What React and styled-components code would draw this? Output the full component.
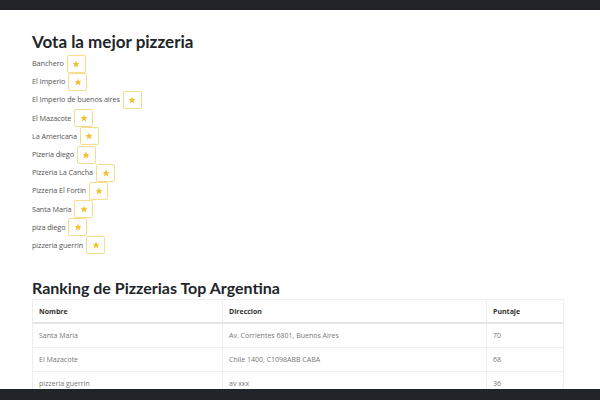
import styled, { createGlobalStyle } from "styled-components";

const pizzerias = [
  "Banchero",
  "El Imperio",
  "El Imperio de buenos aires",
  "El Mazacote",
  "La Americana",
  "Pizeria diego",
  "Pizzeria La Cancha",
  "Pizzeria El Fortin",
  "Santa Maria",
  "piza diego",
  "pizzeria guerrin",
];

const ranking = [
  { nombre: "Santa Maria", direccion: "Av. Corrientes 6801, Buenos Aires", puntaje: 70 },
  { nombre: "El Mazacote", direccion: "Chile 1400, C1098ABB CABA", puntaje: 68 },
  { nombre: "pizzeria guerrin", direccion: "av xxx", puntaje: 36 },
];

const Star = () => (
  <svg width="8" height="8" viewBox="0 0 24 24">
    <path
      d="M12 2l3 6.9 7.5.7-5.7 5 1.7 7.4L12 18.1 5.5 22l1.7-7.4-5.7-5 7.5-.7z"
      fill="#f2c12e"
    />
  </svg>
);

const App = () => {
  return (
    <>
      <GlobalStyle />
      <TopBar />
      <Page>
        <Title>Vota la mejor pizzeria</Title>
        <VoteList>
          {pizzerias.map((name) => (
            <VoteRow key={name}>
              <Name>{name}</Name>
              <StarButton>
                <Star />
              </StarButton>
            </VoteRow>
          ))}
        </VoteList>
        <RankingTitle>Ranking de Pizzerias Top Argentina</RankingTitle>
        <Table>
          <colgroup>
            <col style={{ width: "190px" }} />
            <col style={{ width: "264px" }} />
            <col />
          </colgroup>
          <thead>
            <tr>
              <Th>Nombre</Th>
              <Th>Direccion</Th>
              <Th>Puntaje</Th>
            </tr>
          </thead>
          <tbody>
            {ranking.map((row) => (
              <tr key={row.nombre}>
                <Td>{row.nombre}</Td>
                <Td>{row.direccion}</Td>
                <Td>{row.puntaje}</Td>
              </tr>
            ))}
          </tbody>
        </Table>
      </Page>
      <Footer />
    </>
  );
};

export default App;

const GlobalStyle = createGlobalStyle`
  body {
    margin: 0;
    background: #ffffff;
    font-family: "Open Sans", "Liberation Sans", sans-serif;
  }
`;

const TopBar = styled.div`
  height: 10px;
  background-color: #212529;
`;

const Footer = styled.div`
  position: fixed;
  left: 0;
  right: 0;
  bottom: 0;
  height: 11px;
  background-color: #212529;
`;

const Page = styled.div`
  padding: 0 32px;
`;

const Title = styled.h1`
  margin: 22px 0 2px;
  font-family: Lato, "Open Sans", sans-serif;
  font-size: 17px;
  font-weight: 700;
  line-height: 20px;
  color: #212529;
`;

const VoteList = styled.div`
  display: flex;
  flex-direction: column;
`;

const VoteRow = styled.div`
  display: flex;
  align-items: center;
  gap: 3px;
  height: 18.2px;
`;

const Name = styled.span`
  font-size: 7.3px;
  color: #555;
  letter-spacing: -0.1px;
`;

const StarButton = styled.button`
  display: flex;
  align-items: center;
  justify-content: center;
  width: 19px;
  height: 18px;
  padding: 0;
  margin-top: 1px;
  border: 1px solid #f7dc8c;
  border-radius: 2px;
  background: transparent;
  cursor: pointer;
`;

const RankingTitle = styled.h2`
  margin: 24px 0 1px;
  font-family: Lato, "Open Sans", sans-serif;
  font-size: 16px;
  font-weight: 700;
  line-height: 20px;
  color: #212529;
`;

const Table = styled.table`
  width: 532px;
  table-layout: fixed;
  border-collapse: collapse;
  font-size: 7px;
  color: #777;
`;

const Th = styled.th`
  height: 22px;
  padding: 0 6px;
  text-align: left;
  font-weight: 700;
  color: #333;
  border: 1px solid #eceef0;
  border-bottom: 2px solid #e4e6e8;
`;

const Td = styled.td`
  height: 23px;
  padding: 0 6px;
  border: 1px solid #eceef0;
`;
